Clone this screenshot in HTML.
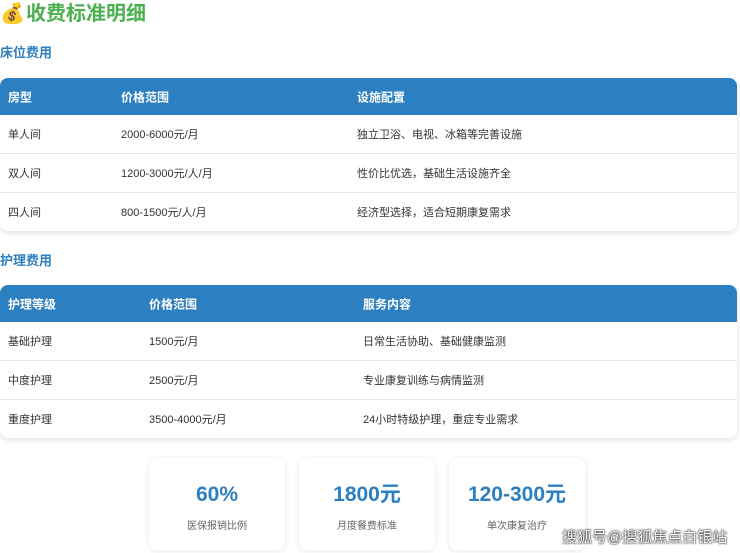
<!DOCTYPE html><html><head><meta charset="utf-8"><style>
body{margin:0;width:740px;height:553px;overflow:hidden;background:#fff;font-family:"Liberation Sans","Noto Sans CJK SC",sans-serif;position:relative}
.a{position:absolute}
.t{position:absolute;left:0;width:737px;border-radius:8px;overflow:hidden;box-shadow:0 2px 6px rgba(0,0,0,.12);background:#fff}
.h{background:#2c7fc0;color:#fff;font-weight:bold;font-size:12px;height:37px;position:relative}
.r{height:38px;position:relative;border-top:1px solid #e6e6e6;font-size:11px;color:#333}
.h span,.r span{position:absolute;top:50%;transform:translateY(-50%)}
.c{position:absolute;top:458px;width:136px;height:92px;border-radius:8px;box-shadow:0 1px 6px rgba(0,0,0,.1);text-align:center;background:#fff}
.c b{position:absolute;left:0;right:0;top:24px;line-height:26px;font-size:21px;color:#2c7fc0}
.c i{position:absolute;left:0;right:0;top:62px;line-height:14px;font-style:normal;font-size:10px;color:#666}
</style></head><body>
<div class="a" style="left:0;top:1px;font-size:20px;line-height:26px">💰</div>
<div class="a" style="left:26px;top:1px;font-size:20px;line-height:26px;font-weight:bold;color:#4caf50">收费标准明细</div>
<div class="a" style="left:0;top:44px;font-size:13px;line-height:18px;font-weight:bold;color:#2c7fc0">床位费用</div>
<div class="t" style="top:78px">
<div class="h"><span style="left:8px">房型</span><span style="left:121px">价格范围</span><span style="left:357px">设施配置</span></div>
<div class="r" style="border:0"><span style="left:8px">单人间</span><span style="left:121px">2000-6000元/月</span><span style="left:357px">独立卫浴、电视、冰箱等完善设施</span></div>
<div class="r"><span style="left:8px">双人间</span><span style="left:121px">1200-3000元/人/月</span><span style="left:357px">性价比优选，基础生活设施齐全</span></div>
<div class="r"><span style="left:8px">四人间</span><span style="left:121px">800-1500元/人/月</span><span style="left:357px">经济型选择，适合短期康复需求</span></div>
</div>
<div class="a" style="left:0;top:252px;font-size:13px;line-height:18px;font-weight:bold;color:#2c7fc0">护理费用</div>
<div class="t" style="top:285px">
<div class="h"><span style="left:8px">护理等级</span><span style="left:149px">价格范围</span><span style="left:363px">服务内容</span></div>
<div class="r" style="border:0"><span style="left:8px">基础护理</span><span style="left:149px">1500元/月</span><span style="left:363px">日常生活协助、基础健康监测</span></div>
<div class="r"><span style="left:8px">中度护理</span><span style="left:149px">2500元/月</span><span style="left:363px">专业康复训练与病情监测</span></div>
<div class="r"><span style="left:8px">重度护理</span><span style="left:149px">3500-4000元/月</span><span style="left:363px">24小时特级护理，重症专业需求</span></div>
</div>
<div class="c" style="left:149px"><b>60%</b><i>医保报销比例</i></div>
<div class="c" style="left:299px"><b>1800元</b><i>月度餐费标准</i></div>
<div class="c" style="left:449px"><b>120-300元</b><i>单次康复治疗</i></div>
<div class="a" style="left:562px;top:528px;font-size:15px;line-height:20px;color:#fff;text-shadow:0 0 2px #000,0 0 1px #000">搜狐号@搜狐焦点白银站</div>
</body></html>
